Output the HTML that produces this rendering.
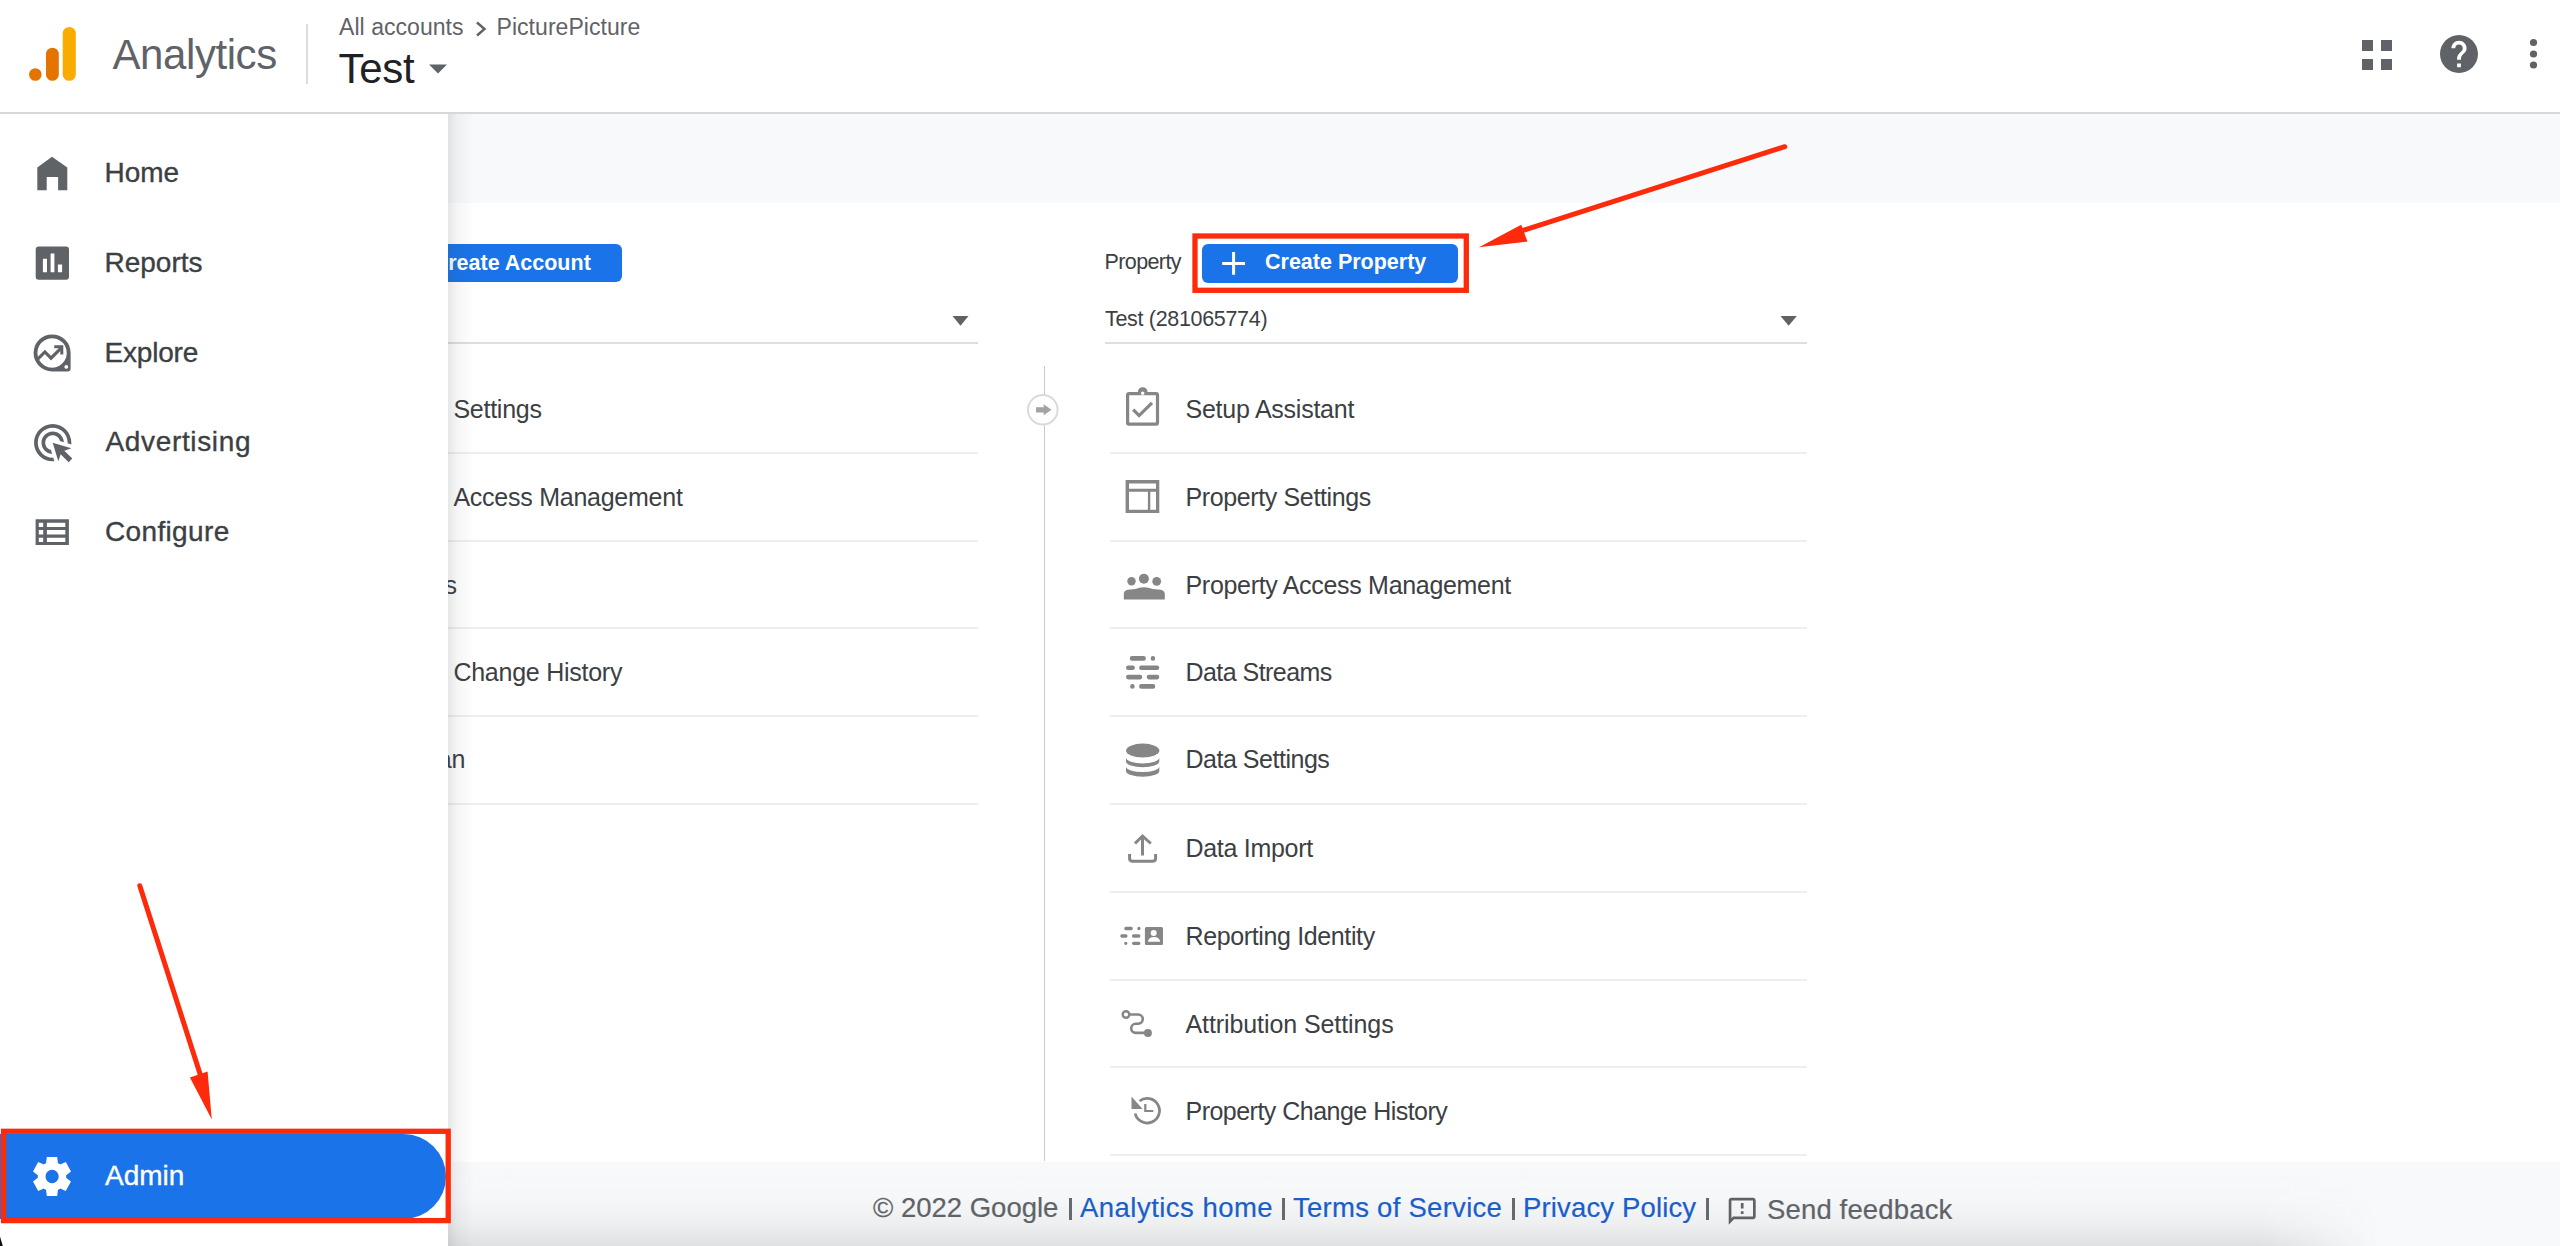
<!DOCTYPE html>
<html><head><meta charset="utf-8">
<style>
html,body{margin:0;padding:0;}
body{width:2560px;height:1246px;position:relative;overflow:hidden;background:#fff;font-family:"Liberation Sans",sans-serif;}
.a{position:absolute;white-space:nowrap;line-height:1;}
svg{position:absolute;overflow:visible;}
#header{position:absolute;left:0;top:0;width:2560px;height:112px;background:#fff;}
#hline{position:absolute;left:0;top:112px;width:2560px;height:2px;background:#d6d8db;}
#band{position:absolute;left:448px;top:114px;width:2112px;height:89px;background:#f8f9fa;}
#sidebar{position:absolute;left:0;top:114px;width:448px;height:1132px;background:#fff;z-index:5;}
#shadow{position:absolute;left:448px;top:114px;width:26px;height:1132px;z-index:4;background:linear-gradient(to right,rgba(60,64,67,0.13),rgba(60,64,67,0.05) 35%,rgba(60,64,67,0));}
#footer{position:absolute;left:448px;top:1161.5px;width:2112px;height:85px;background:#f8f9fa;}
#fshade{position:absolute;left:0;top:0;width:1932px;height:85px;background:linear-gradient(to bottom,rgba(60,64,67,0) 0%,rgba(60,64,67,0.008) 40%,rgba(60,64,67,0.05) 72%,rgba(60,64,67,0.135) 100%);-webkit-mask-image:linear-gradient(to right,#000 0,#000 1812px,transparent 100%);}
.nav{font-size:28px;color:#3c4043;-webkit-text-stroke:0.35px currentColor;}
.li{font-size:25px;color:#3c4043;letter-spacing:-0.25px;}
.ic{fill:#868686;}
.ft{font-size:27.5px;color:#5f6368;-webkit-text-stroke:0.2px currentColor;}
.lk{color:#1a5fc9;}
</style></head><body>

<!-- HEADER -->
<div id="header">
  <svg style="left:0;top:0" width="100" height="100">
    <circle cx="35.3" cy="74.5" r="6.3" fill="#e37400"/>
    <rect x="46" y="47.7" width="12.8" height="33.1" rx="6.4" fill="#e37400"/>
    <rect x="62.7" y="26.9" width="13.1" height="53.9" rx="6.5" fill="#f9ab00"/>
  </svg>
  <div class="a" style="left:112.5px;top:33.5px;font-size:42px;color:#5f6368;letter-spacing:-0.42px">Analytics</div>
  <div style="position:absolute;left:306px;top:24px;width:2px;height:60px;background:#dadce0"></div>
  <div class="a" style="left:339px;top:16px;font-size:23px;color:#5f6368;letter-spacing:0.05px">All accounts</div>
  <svg style="left:474px;top:20px" width="14" height="18"><path d="M3 2.5 L10.5 9 L3 15.5" stroke="#5f6368" stroke-width="2.4" fill="none"/></svg>
  <div class="a" style="left:496.5px;top:16px;font-size:23px;color:#5f6368;letter-spacing:0.05px">PicturePicture</div>
  <div class="a" style="left:338.5px;top:47.5px;font-size:42px;color:#202124;letter-spacing:-0.3px">Test</div>
  <svg style="left:429px;top:64px" width="20" height="11"><path d="M0 0.5 L18 0.5 L9 9.5 Z" fill="#5f6368"/></svg>

  <!-- right icons -->
  <svg style="left:2362px;top:40px" width="31" height="31" fill="#5f6368">
    <rect x="0" y="0" width="11" height="11"/><rect x="19" y="0" width="11" height="11"/>
    <rect x="0" y="19" width="11" height="11"/><rect x="19" y="19" width="11" height="11"/>
  </svg>
  <svg style="left:2440px;top:35px" width="38" height="38" viewBox="2 2 20 20">
    <path fill="#5f6368" d="M12 2C6.48 2 2 6.48 2 12s4.48 10 10 10 10-4.48 10-10S17.52 2 12 2zm1 17h-2v-2h2v2zm2.07-7.75l-.9.92C13.45 12.9 13 13.5 13 15h-2v-.5c0-1.1.45-2.1 1.17-2.83l1.24-1.26c.37-.36.59-.86.59-1.41 0-1.1-.9-2-2-2s-2 .9-2 2H8c0-2.21 1.79-4 4-4s4 1.79 4 4c0 .88-.36 1.68-.93 2.25z"/>
  </svg>
  <svg style="left:2529px;top:38px" width="10" height="32" fill="#5f6368">
    <circle cx="4.5" cy="4.5" r="3.6"/><circle cx="4.5" cy="16" r="3.6"/><circle cx="4.5" cy="27" r="3.6"/>
  </svg>
</div>
<div id="hline"></div>
<div id="band"></div>

<!-- CONTENT -->
<div id="content">
<div style="position:absolute;left:300px;top:244.3px;width:321.7px;height:38.2px;background:#1a73e8;border-radius:6px"></div>
<div class="a" style="left:432.7px;top:252.9px;font-size:21.5px;font-weight:bold;color:#fff">Create Account</div>
<svg style="left:952px;top:316px" width="18" height="10"><path d="M0.5 0 L16.5 0 L8.5 9.8 Z" fill="#5f6368"/></svg>
<div style="position:absolute;left:276px;top:341.5px;width:701.5px;height:2px;background:#dcdee1"></div>
<div class="a li" style="left:453.4px;top:397.1px">Settings</div>
<div class="a li" style="left:453.4px;top:485.0px">Access Management</div>
<div class="a li" style="left:444.5px;top:573.1px">s</div>
<div class="a li" style="left:453.4px;top:660.3px">Change History</div>
<div class="a li" style="left:437.8px;top:747.4px">an</div>
<div style="position:absolute;left:276px;top:451.8px;width:701.5px;height:2px;background:#eceef0"></div>
<div style="position:absolute;left:276px;top:539.5px;width:701.5px;height:2px;background:#eceef0"></div>
<div style="position:absolute;left:276px;top:626.8px;width:701.5px;height:2px;background:#eceef0"></div>
<div style="position:absolute;left:276px;top:715.0px;width:701.5px;height:2px;background:#eceef0"></div>
<div style="position:absolute;left:276px;top:802.8px;width:701.5px;height:2px;background:#eceef0"></div>
<div style="position:absolute;left:1043.6px;top:366.3px;width:1.8px;height:795px;background:#c8cacc"></div>
<svg style="left:1020px;top:388px" width="46" height="46"><circle cx="22.8" cy="21.8" r="14.8" fill="#fff" stroke="#d9dadc" stroke-width="2"/><path d="M16 19.2 H23.7 V16.3 L31.5 21.8 L23.7 27.2 V24.6 H16 Z" fill="#a3a3a3"/></svg>
<div class="a" style="left:1104.5px;top:252.4px;font-size:21.5px;color:#3c4043;letter-spacing:-0.6px">Property</div>
<div style="position:absolute;left:1201.7px;top:243.8px;width:256.3px;height:39.2px;background:#1a73e8;border-radius:6px"></div>
<svg style="left:1220px;top:250px" width="28" height="28"><path d="M13.6 2 V24.8 M2.2 13.4 H25" stroke="#fff" stroke-width="3" fill="none"/></svg>
<div class="a" style="left:1265px;top:251.7px;font-size:21.5px;font-weight:bold;color:#fff">Create Property</div>
<div class="a" style="left:1105px;top:309.3px;font-size:21.5px;color:#3c4043;letter-spacing:-0.32px">Test (281065774)</div>
<svg style="left:1780px;top:316px" width="18" height="10"><path d="M0.5 0 L16.8 0 L8.65 9.8 Z" fill="#5f6368"/></svg>
<div style="position:absolute;left:1105px;top:341.8px;width:702px;height:2px;background:#dcdee1"></div>
<div class="a li" style="left:1185.5px;top:397.1px">Setup Assistant</div>
<div class="a li" style="left:1185.5px;top:485.0px;letter-spacing:-0.375px">Property Settings</div>
<div class="a li" style="left:1185.5px;top:573.1px;letter-spacing:-0.31px">Property Access Management</div>
<div class="a li" style="left:1185.5px;top:660.3px;letter-spacing:-0.55px">Data Streams</div>
<div class="a li" style="left:1185.5px;top:747.4px;letter-spacing:-0.48px">Data Settings</div>
<div class="a li" style="left:1185.5px;top:835.8px;letter-spacing:-0.3px">Data Import</div>
<div class="a li" style="left:1185.5px;top:923.9px;letter-spacing:-0.37px">Reporting Identity</div>
<div class="a li" style="left:1185.5px;top:1011.5px;letter-spacing:-0.09px">Attribution Settings</div>
<div class="a li" style="left:1185.5px;top:1099.1px;letter-spacing:-0.52px">Property Change History</div>
<div style="position:absolute;left:1109.5px;top:451.8px;width:697.5px;height:2px;background:#eceef0"></div>
<div style="position:absolute;left:1109.5px;top:539.5px;width:697.5px;height:2px;background:#eceef0"></div>
<div style="position:absolute;left:1109.5px;top:626.8px;width:697.5px;height:2px;background:#eceef0"></div>
<div style="position:absolute;left:1109.5px;top:715.0px;width:697.5px;height:2px;background:#eceef0"></div>
<div style="position:absolute;left:1109.5px;top:802.8px;width:697.5px;height:2px;background:#eceef0"></div>
<div style="position:absolute;left:1109.5px;top:890.9px;width:697.5px;height:2px;background:#eceef0"></div>
<div style="position:absolute;left:1109.5px;top:979.2px;width:697.5px;height:2px;background:#eceef0"></div>
<div style="position:absolute;left:1109.5px;top:1066.0px;width:697.5px;height:2px;background:#eceef0"></div>
<div style="position:absolute;left:1109.5px;top:1154.0px;width:697.5px;height:2px;background:#eceef0"></div>
<svg style="left:0;top:0" width="2560" height="1246" class="ic">
 <g fill="#868686">
  <!-- setup assistant -->
  <path fill-rule="evenodd" d="M1129 392 H1137.9 A4.8 4.8 0 0 1 1147.5 392 H1156.1 A3 3 0 0 1 1159.1 395 V422.7 A3 3 0 0 1 1156.1 425.7 H1129 A3 3 0 0 1 1126 422.7 V395 A3 3 0 0 1 1129 392 Z M1129.2 395.2 V422.5 H1155.9 V395.2 Z M1142.7 391.4 A1.8 1.8 0 1 0 1142.7 395 A1.8 1.8 0 1 0 1142.7 391.4 Z"/>
  <path d="M1133.2 409.6 L1139.1 415.6 L1152 402.8" stroke="#868686" stroke-width="3.2" fill="none"/>
  <!-- property settings -->
  <path fill-rule="evenodd" d="M1125.6 480 H1159.3 V513.1 H1125.6 Z M1129 483.4 V488.7 H1156 V483.4 Z M1129 491.8 V509.8 H1147.9 V491.8 Z M1150.3 491.8 V509.8 H1156 V491.8 Z"/>
  <!-- groups -->
  <circle cx="1131.5" cy="581.3" r="4.2"/><circle cx="1143.9" cy="578.8" r="5"/><circle cx="1156.7" cy="581.3" r="4.4"/>
  <path d="M1123.8 599.5 V594 Q1123.8 589.8 1130 589.6 Q1136 589.2 1138.5 588 Q1143.9 586.6 1149.3 588 Q1152 589.2 1158 589.6 Q1164.8 589.8 1164.8 594 V599.5 Z"/>
  <!-- data streams -->
  <g stroke="#868686" stroke-width="4.6" stroke-linecap="round" fill="none">
   <path d="M1132.1 658.4 H1143.6 M1152.9 658.4 H1152.9 M1128.3 667.8 H1132.6 M1141.4 667.8 H1157 M1128.3 677.1 H1140 M1149 677.1 H1157 M1132.4 686.4 H1132.4 M1141.4 686.4 H1153"/>
  </g>
  <!-- data settings -->
  <ellipse cx="1142.7" cy="750.6" rx="16.65" ry="7"/>
  <path d="M1126 757.5 A16.65 6 0 0 0 1159.3 757.5 V761.3 A16.65 6 0 0 1 1126 761.3 Z"/>
  <path d="M1126 766.5 A16.65 5.6 0 0 0 1159.3 766.5 V771 A16.65 5.8 0 0 1 1126 771 Z"/>
  <!-- data import -->
  <path d="M1142.5 855.5 V836 M1135 843.5 L1142.5 836 L1150.8 843.5" stroke="#868686" stroke-width="3" fill="none"/>
  <path d="M1129.6 853.9 V858.6 Q1129.6 861.2 1132.2 861.2 H1153 Q1155.6 861.2 1155.6 858.6 V853.9" stroke="#868686" stroke-width="3" fill="none"/>
  <!-- reporting identity -->
  <g stroke="#868686" stroke-width="3.3" stroke-linecap="round" fill="none">
   <path d="M1125.9 928.5 H1131.2 M1138.9 928.5 H1138.9 M1121.9 936 H1125.9 M1133.6 936 H1138.8 M1125.8 943.3 H1125.8 M1133.6 943.3 H1138.8"/>
  </g>
  <path fill-rule="evenodd" d="M1146.4 926.9 H1161.5 A1.5 1.5 0 0 1 1163 928.4 V943.4 A1.5 1.5 0 0 1 1161.5 944.9 H1146.4 A1.5 1.5 0 0 1 1144.9 943.4 V928.4 A1.5 1.5 0 0 1 1146.4 926.9 Z M1153.7 929.9 A3 3 0 1 0 1153.7 935.9 A3 3 0 1 0 1153.7 929.9 Z M1147.9 941.7 Q1148.5 937.2 1154 937.1 Q1159.6 937.2 1160.2 941.7 Z"/>
  <!-- attribution -->
  <circle cx="1126" cy="1014.5" r="3.3" stroke="#868686" stroke-width="2.4" fill="none"/>
  <path d="M1129.3 1014.5 H1138.2 A4.6 4.6 0 0 1 1138.2 1023.7 H1135.8 A4.6 4.6 0 0 0 1135.8 1032.9 H1146" stroke="#868686" stroke-width="2.6" fill="none"/>
  <circle cx="1147.9" cy="1032.9" r="4"/>
  <!-- history -->
  <path d="M1135.2 1113.5 A12.3 12.3 0 1 0 1139.6 1101" stroke="#868686" stroke-width="2.8" fill="none"/>
  <path d="M1131.5 1096.5 V1109 H1142.5 Z"/>
  <path d="M1145.3 1104 V1111 H1153.3" stroke="#868686" stroke-width="2.2" fill="none"/>
 </g>
</svg>
</div>

<div id="footer">
  <div id="fshade"></div>
  <div class="a ft" style="left:425px;top:32.2px;letter-spacing:0px">© 2022 Google</div>
  <div style="position:absolute;left:621px;top:36.5px;width:3px;height:22px;background:#66696d"></div>
  <div class="a ft lk" style="left:632px;top:32.2px;letter-spacing:0.47px">Analytics home</div>
  <div style="position:absolute;left:834px;top:36.5px;width:3px;height:22px;background:#66696d"></div>
  <div class="a ft lk" style="left:845px;top:32.2px;letter-spacing:0.27px">Terms of Service</div>
  <div style="position:absolute;left:1064px;top:36.5px;width:3px;height:22px;background:#66696d"></div>
  <div class="a ft lk" style="left:1075px;top:32.2px;letter-spacing:0.15px">Privacy Policy</div>
  <div style="position:absolute;left:1258px;top:36.5px;width:3px;height:22px;background:#66696d"></div>
  <svg style="left:1278px;top:33.5px" width="32.4" height="32.4" viewBox="0 0 24 24"><path fill="#5f6368" d="M20 2H4c-1.1 0-1.990.9-1.99 2L2 22l4-4h14c1.1 0 2-.9 2-2V4c0-1.1-.9-2-2-2zm0 14H5.17L4 17.17V4h16v12zM11 12h2v2h-2zm0-6h2v4h-2z"/></svg>
  <div class="a ft" style="left:1319px;top:34.5px;letter-spacing:0.15px">Send feedback</div>
</div>

<!-- SIDEBAR -->
<div id="sidebar">
  <svg style="left:0;top:-114px" width="448" height="1246">
    <g fill="#5f6368">
      <path d="M37.3 167.6 L52 156.7 L67.3 167.6 L67.3 190.3 L58.1 190.3 L58.1 177 L46.7 177 L46.7 190.3 L37.3 190.3 Z"/>
      <path fill-rule="evenodd" d="M38.7 246.6 H66 A3 3 0 0 1 69 249.6 V276.7 A3 3 0 0 1 66 279.7 H38.7 A3 3 0 0 1 35.7 276.7 V249.6 A3 3 0 0 1 38.7 246.6 Z M42.9 258.8 V272.3 H47 V258.8 Z M50.6 253.6 V272.3 H54.4 V253.6 Z M57.9 264.6 V272.3 H62.1 V264.6 Z"/>
      <path fill-rule="evenodd" d="M70.6 352.9 A18.5 18.5 0 1 0 52.1 371.4 L67.6 371.4 A3 3 0 0 0 70.6 368.4 Z M66.8 352.9 A14.7 14.7 0 1 0 66.8 352.95 Z M68.2 366.9 A1.9 1.9 0 1 0 68.2 366.95 Z"/>
      <path d="M37.2 359.7 L44.9 352 L51 358.2 L61.3 347.8" stroke="#5f6368" stroke-width="3.1" fill="none"/>
      <path d="M54.3 345.3 H63.3 V354.5 H60.3 V348.3 H54.3 Z"/>
      <svg x="30.3" y="420.3" width="44.8" height="44.8" viewBox="0 0 24 24"><path d="M11.71,17.99C8.53,17.84,6,15.22,6,12c0-3.31,2.690-6,6-6c3.22,0,5.840,2.53,5.99,5.71l-2.1-0.63C15.48,9.31,13.89,8,12,8 c-2.21,0-4,1.79-4,4c0,1.89,1.31,3.48,3.080,3.89L11.71,17.99z M22,12c0,0.3-0.01,0.6-0.04,0.9l-1.97-0.59C20,12.21,20,12.1,20,12 c0-4.42-3.58-8-8-8s-8,3.58-8,8s3.58,8,8,8c0.1,0,0.21,0,0.31-0.01l0.59,1.97C12.6,21.99,12.3,22,12,22C6.48,22,2,17.52,2,12 C2,6.48,6.48,2,12,2S22,6.48,22,12z M18.23,16.26L22,15l-10-3l3,10l1.26-3.77l4.27,4.27l1.97-1.97L18.23,16.26z"/></svg>
      <path fill-rule="evenodd" d="M35.6 519.2 H68.9 V544.9 H35.6 Z M38.8 522.7 H43.2 V527.1 H38.8 Z M46.9 522.7 H65.3 V527.1 H46.9 Z M38.8 530.1 H43.2 V534.5 H38.8 Z M46.9 530.1 H65.3 V534.5 H46.9 Z M38.8 537.7 H43.2 V542.1 H38.8 Z M46.9 537.7 H65.3 V542.1 H46.9 Z"/>
    </g>
  </svg>
  <div class="a nav" style="left:104.5px;top:45.3px">Home</div>
  <div class="a nav" style="left:104.5px;top:135.3px">Reports</div>
  <div class="a nav" style="left:104.5px;top:225px;letter-spacing:-0.2px">Explore</div>
  <div class="a nav" style="left:105.5px;top:314.3px;letter-spacing:0.65px">Advertising</div>
  <div class="a nav" style="left:105px;top:404.1px;letter-spacing:0.35px">Configure</div>
  <div style="position:absolute;left:0;top:1020px;width:446px;height:85px;background:#1a73e8;border-radius:0 42.5px 42.5px 0"></div>
  <svg style="left:33px;top:1042.5px" width="38" height="39" viewBox="78 -880 804 800" preserveAspectRatio="none"><path fill="#fff" d="m370-80-16-128q-13-5-24.5-12T307-235l-119 50L78-375l103-78q-1-7-1-13.5v-27q0-6.5 1-13.5L78-585l110-190 119 50q11-8 23-15t24-12l16-128h220l16 128q13 5 24.5 12t22.5 15l119-50 110 190-103 78q1 7 1 13.5v27q0 6.5-2 13.5l103 78-110 190-118-50q-11 8-23 15t-24 12L590-80H370Zm112-260q58 0 99-41t41-99q0-58-41-99t-99-41q-59 0-99.5 41T342-480q0 58 40.5 99t99.5 41Z"/></svg>
  <div class="a nav" style="left:105px;top:1047.6px;color:#fff">Admin</div>
</div>
<div id="shadow"></div>

<svg style="left:0;top:0;z-index:10" width="2560" height="1246">
  <rect x="1195" y="236" width="271.3" height="54.3" fill="none" stroke="#fd2b0b" stroke-width="5.3"/>
  <path d="M1784.8 146.7 L1515 233" stroke="#fd2b0b" stroke-width="5" stroke-linecap="round" fill="none"/>
  <path d="M1479 247.3 L1521.2 224.8 L1527.5 241.6 Z" fill="#fd2b0b"/>
  <path d="M0 1236.5 L2.8 1246 L0 1246 Z" fill="#111"/>
  <rect x="3.6" y="1131.3" width="444.6" height="89.3" fill="none" stroke="#fd2b0b" stroke-width="5.3"/>
  <path d="M139.8 885.7 L202 1080" stroke="#fd2b0b" stroke-width="5" stroke-linecap="round" fill="none"/>
  <path d="M211.8 1119.4 L189.9 1077.6 L207.6 1071.4 Z" fill="#fd2b0b"/>
</svg>
</body></html>
